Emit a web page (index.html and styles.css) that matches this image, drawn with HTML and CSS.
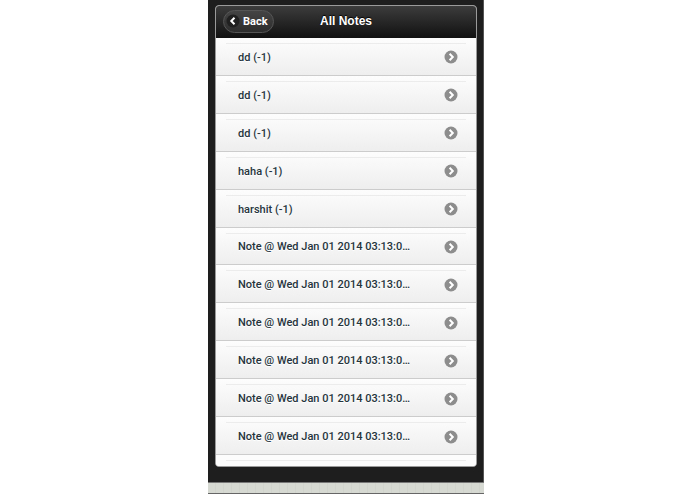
FILE: index.html
```html
<!DOCTYPE html>
<html lang="en">
<head>
<meta charset="utf-8">
<title>All Notes</title>
<link rel="stylesheet" href="styles.css">
</head>
<body>
<svg class="defs" aria-hidden="true">
  <symbol id="go" viewBox="0 0 14 14"><circle cx="7" cy="7" r="6.5" fill="#8d8d8d"/><path d="M5.6 3.8 8.8 7 5.6 10.2" fill="none" stroke="#fff" stroke-width="2"/></symbol>
</svg>
<div class="page">
  <div class="device">
    <main class="screen">
      <header class="header">
        <button class="back" type="button"><svg class="back-icon" viewBox="0 0 14 14" aria-hidden="true"><circle cx="7" cy="7" r="6.5" fill="#202020"/><path d="M8.5 3.8 5.3 7 8.5 10.2" fill="none" stroke="#fff" stroke-width="2"/></svg>Back</button>
        <h1 class="title">All Notes</h1>
      </header>
      <ul class="notes">
        <li class="note"><a class="link" href="#"><span class="name">dd (-1)</span><svg class="go"><use href="#go"/></svg></a></li>
        <li class="note"><a class="link" href="#"><span class="name">dd (-1)</span><svg class="go"><use href="#go"/></svg></a></li>
        <li class="note"><a class="link" href="#"><span class="name">dd (-1)</span><svg class="go"><use href="#go"/></svg></a></li>
        <li class="note"><a class="link" href="#"><span class="name">haha (-1)</span><svg class="go"><use href="#go"/></svg></a></li>
        <li class="note"><a class="link" href="#"><span class="name">harshit (-1)</span><svg class="go"><use href="#go"/></svg></a></li>
        <li class="note"><a class="link" href="#"><span class="name">Note @ Wed Jan 01 2014 03:13:0…</span><svg class="go"><use href="#go"/></svg></a></li>
        <li class="note"><a class="link" href="#"><span class="name">Note @ Wed Jan 01 2014 03:13:0…</span><svg class="go"><use href="#go"/></svg></a></li>
        <li class="note"><a class="link" href="#"><span class="name">Note @ Wed Jan 01 2014 03:13:0…</span><svg class="go"><use href="#go"/></svg></a></li>
        <li class="note"><a class="link" href="#"><span class="name">Note @ Wed Jan 01 2014 03:13:0…</span><svg class="go"><use href="#go"/></svg></a></li>
        <li class="note"><a class="link" href="#"><span class="name">Note @ Wed Jan 01 2014 03:13:0…</span><svg class="go"><use href="#go"/></svg></a></li>
        <li class="note"><a class="link" href="#"><span class="name">Note @ Wed Jan 01 2014 03:13:0…</span><svg class="go"><use href="#go"/></svg></a></li>
        <li class="note"></li>
      </ul>
    </main>
  </div>
  <div class="desk"></div>
</div>
</body>
</html>
```

FILE: styles.css
```css
* { box-sizing: border-box; }
body {
  margin: 0;
  padding-right: 3px;
  background: #fff;
  font-family: Roboto, "Liberation Sans", Arial, sans-serif;
  font-size: 11px;
  font-weight: 500;
}
.defs { display: none; }
.page {
  display: flex;
  flex-direction: column;
  width: 30%;
  min-width: 276px;
  max-width: 320px;
  min-height: 100vh;
  margin: 0 auto;
}
.device {
  flex: 1;
  display: flex;
  padding: 5px 6px 15px 7px;
  background: #1e1e1e;
  border-right: 1px solid #555;
}
.screen {
  flex: 1;
  display: flex;
  flex-direction: column;
  min-width: 0;
  overflow: hidden;
  border: 1px solid #9a9a9a;
  border-radius: 4px;
  background: #fafafa;
}
.header {
  display: grid;
  grid-template-columns: 1fr auto 1fr;
  align-items: center;
  height: 32px;
  padding: 0 7px 2px;
  background: linear-gradient(#3c3c3c, #111);
  color: #fff;
}
.back {
  justify-self: start;
  display: flex;
  align-items: center;
  gap: 3px;
  height: 23px;
  padding: 0 5px 0 2px;
  border: 1px solid #555;
  border-radius: 12px;
  background: linear-gradient(#444, #2d2d2d);
  color: #fff;
  font: inherit;
  font-weight: bold;
}
.back-icon { width: 14px; height: 14px; }
.title {
  margin: 0;
  font-family: "Liberation Sans", Arial, sans-serif;
  font-size: 12px;
  text-shadow: 0 -1px 1px #000;
}
.notes {
  flex: 1;
  display: grid;
  grid-template-rows: repeat(11, 1fr) 11px;
  margin: 0;
  padding: 0;
  list-style: none;
}
.note {
  display: grid;
  grid-template-rows: 1px 1fr;
  padding: 5px 10px 0;
  border-bottom: 1px solid #ccc;
  background: linear-gradient(#fdfdfd, #eee);
}
.note:last-child {
  border-bottom: 0;
  background: #fcfcfc;
}
.note::before {
  content: "";
  background: #ececec;
}
.link {
  display: flex;
  align-items: center;
  justify-content: space-between;
  padding: 0 8px 4px 12px;
  color: #25343c;
  text-decoration: none;
  text-shadow: 0 1px 0 #fff;
}
.name { white-space: nowrap; }
.go { width: 14px; height: 14px; }
.desk {
  height: 12px;
  border-top: 1px solid #777;
  border-bottom: 1px solid #666;
  background: repeating-linear-gradient(90deg, #d6d9d1 0 7px, #d1d4cc 7px 8px);
}
```
